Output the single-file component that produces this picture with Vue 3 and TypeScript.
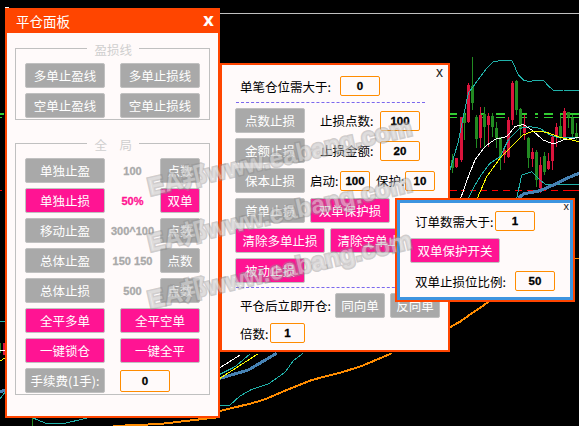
<script setup lang="ts">
type Candle = [number, 0 | 1, number, number, number, number]
const pts = (a: number[][], ox: number, oy: number) =>
  a.map(([x, y]) => `${(x / 3 + ox).toFixed(1)},${(y / 3 + oy).toFixed(1)}`).join(' ')

const candles: Candle[] = [
  [37, 0, 462, 520, 480, 505], [49, 1, 475, 505, 475, 503], [62, 1, 350, 485, 350, 480],
  [73, 0, 335, 420, 345, 370], [85, 1, 250, 370, 255, 365], [97, 0, 170, 330, 258, 310],
  [109, 0, 345, 445, 350, 415], [121, 1, 322, 445, 345, 415], [133, 0, 320, 440, 342, 380],
  [145, 1, 340, 440, 348, 375], [157, 0, 340, 410, 348, 380], [169, 0, 365, 445, 385, 415],
  [181, 0, 410, 510, 412, 475], [193, 1, 440, 490, 450, 465], [205, 1, 350, 475, 360, 470],
  [217, 1, 243, 375, 250, 360], [229, 0, 240, 345, 243, 330], [241, 0, 325, 410, 327, 385],
  [253, 1, 345, 420, 375, 400], [265, 0, 410, 505, 415, 475], [277, 1, 445, 500, 455, 477],
  [289, 0, 450, 560, 457, 540], [301, 1, 470, 580, 495, 565], [313, 0, 455, 525, 468, 515],
  [325, 1, 460, 510, 482, 505], [337, 1, 405, 510, 410, 482], [349, 1, 370, 440, 380, 410],
  [361, 0, 345, 420, 378, 410], [373, 1, 325, 415, 333, 410], [385, 0, 335, 385, 337, 352],
  [397, 0, 345, 410, 353, 400], [409, 0, 368, 420, 400, 415],
]
const candleView = candles.map(([x, up, t, b, bt, bb]) => ({
  x: Math.round(x / 3 + 440), up, t: Math.round(t / 3), b: Math.round(b / 3), bt: Math.round(bt / 3), bh: Math.round((bb - bt) / 3),
}))

const lines = [
  { c: '#20b2aa', w: 1, p: pts([[30, 510], [55, 425], [70, 350], [85, 280], [110, 245], [125, 225], [140, 205], [160, 185], [180, 182], [215, 182], [222, 195], [235, 225], [250, 240], [270, 245], [285, 240], [310, 240], [325, 258], [340, 270], [370, 270], [417, 273]], 440, 0) },
  { c: '#20b2aa', w: 1, p: pts([[85, 595], [100, 565], [120, 530], [150, 490], [180, 470], [205, 420], [240, 385], [270, 380], [300, 385], [330, 405], [350, 412], [417, 412]], 440, 0) },
  { c: '#ffffff', w: 1, p: pts([[62, 595], [85, 530], [105, 480], [135, 440], [165, 418], [200, 410], [225, 380], [250, 373], [275, 390], [310, 420], [340, 432], [370, 420], [417, 412]], 440, 0) },
  { c: '#ffff00', w: 1, p: pts([[112, 595], [140, 530], [180, 475], [220, 435], [250, 405], [280, 393], [320, 397], [360, 412], [417, 425]], 440, 0) },
  { c: '#20b2aa', w: 1, p: pts([[230, 595], [245, 525], [275, 515], [300, 540], [315, 552], [417, 552]], 440, 0) },
  { c: '#4682b4', w: 3, p: pts([[235, 595], [250, 582], [300, 572], [340, 555], [380, 535], [417, 520]], 440, 0) },
  { c: '#ffffff', w: 1, p: pts([[15, 83], [75, 45]], 215, 340) },
  { c: '#20b2aa', w: 1, p: pts([[15, 103], [60, 80], [105, 42]], 215, 340) },
  { c: '#4682b4', w: 3, p: pts([[15, 115], [100, 90], [185, 40]], 215, 340) },
  { c: '#ffff00', w: 1, p: pts([[15, 115], [128, 42]], 215, 340) },
  { c: '#20b2aa', w: 1, p: pts([[15, 197], [45, 195], [75, 168], [110, 148], [160, 132], [210, 97], [235, 62], [265, 40]], 215, 340) },
  { c: '#ff8c00', w: 2, p: pts([[15, 213], [110, 190], [150, 178], [210, 152], [290, 120], [380, 97], [440, 78], [530, 40]], 215, 340) },
  { c: '#ff8c00', w: 2, p: pts([[30, 112], [60, 95], [95, 70], [125, 50], [145, 35]], 440, 290) },
  { c: '#ff8c00', w: 2, p: '113,426 160,424 220,417' },
  { c: '#20b2aa', w: 1, p: '33,418 45,423 62,424 87,418' },
  { c: '#20b2aa', w: 1, p: '0,321 5,321' },
  { c: '#ffffff', w: 1, p: '0,351 5,350' },
  { c: '#ffff00', w: 1, p: '0,361 5,358' },
  { c: '#4682b4', w: 3, p: '0,392 5,390' },
  { c: '#20b2aa', w: 1, p: '0,399 5,392' },
]

const greenDashes = [[450, 457], [463, 466], [480, 484], [496, 505], [520, 527], [535, 538], [544, 553], [560, 579]]
const redDashes = [[450, 457], [461, 465], [470, 476], [481, 487], [492, 498], [503, 510], [515, 522], [527, 534], [539, 546], [551, 558], [563, 579]]

const rows = [
  { btn: '单独止盈', pink: false, val: '100', valPink: false, unit: '点数', unitPink: false },
  { btn: '单独止损', pink: true, val: '50%', valPink: true, unit: '双单', unitPink: true },
  { btn: '移动止盈', pink: false, val: '300^100', valPink: false, unit: '点数', unitPink: false },
  { btn: '总体止盈', pink: false, val: '150 150', valPink: false, unit: '点数', unitPink: false },
  { btn: '总体止损', pink: false, val: '500', valPink: false, unit: '点数', unitPink: false },
]
const watermarks = ['wm1', 'wm2', 'wm3']
</script>

<template>
  <div class="desk">
    <svg class="chart" width="579" height="426" viewBox="0 0 579 426" shape-rendering="crispEdges">
      <path d="M5 10V7H9" fill="none" stroke="#fff" stroke-width="1" />
      <rect x="5" y="13" width="574" height="1" fill="#c0c0c0" />
      <rect x="0" y="113" width="4" height="2" fill="#32cd32" />
      <rect x="0" y="117" width="2" height="1" fill="#32cd32" />
      <rect x="0" y="190" width="2" height="1" fill="#ff0000" />
      <rect x="0" y="343" width="1" height="10" fill="#228b22" />
      <rect x="3" y="343" width="2" height="12" fill="#dc143c" />
      <rect x="32" y="418" width="1" height="8" fill="#228b22" />
      <g v-for="d in greenDashes" :key="'g' + d[0]">
        <rect :x="d[0]" y="113" :width="d[1] - d[0]" height="2" fill="#32cd32" />
        <rect :x="d[0]" y="117" :width="d[1] - d[0]" height="1" fill="#32cd32" />
      </g>
      <rect v-for="d in redDashes" :key="'r' + d[0]" :x="d[0]" y="190" :width="d[1] - d[0]" height="1" fill="#ff0000" />
      <g v-for="k in candleView" :key="k.x">
        <rect :x="k.x" :y="k.t" width="1" :height="k.b - k.t" :fill="k.up ? '#dc143c' : '#228b22'" />
        <rect :x="k.x - 1" :y="k.bt" width="3" :height="k.bh" :fill="k.up ? '#dc143c' : '#228b22'" />
      </g>
      <polyline v-for="l in lines" :key="l.p" :points="l.p" fill="none" :stroke="l.c" :stroke-width="l.w" />
      <rect x="575" y="258" width="4" height="1" fill="#ff8c00" />
    </svg>

    <section class="win left">
      <header class="title">
        <span>平仓面板</span>
        <span class="close-big">x</span>
      </header>
      <fieldset class="group first">
        <legend>盈损线</legend>
        <div class="pair">
          <button class="btn w80">多单止盈线</button>
          <button class="btn w80">多单止损线</button>
        </div>
        <div class="pair">
          <button class="btn w80">空单止盈线</button>
          <button class="btn w80">空单止损线</button>
        </div>
      </fieldset>
      <fieldset class="group second">
        <legend>全　局</legend>
        <div v-for="r in rows" :key="r.btn" class="triple">
          <button class="btn" :class="{ pink: r.pink }">{{ r.btn }}</button>
          <span class="val" :class="{ 'val-pink': r.valPink }">{{ r.val }}</span>
          <button class="btn" :class="{ pink: r.unitPink }">{{ r.unit }}</button>
        </div>
        <div class="pair">
          <button class="btn pink w80">全平多单</button>
          <button class="btn pink w80">全平空单</button>
        </div>
        <div class="pair">
          <button class="btn pink w80">一键锁仓</button>
          <button class="btn pink w80">一键全平</button>
        </div>
        <div class="pair">
          <button class="btn w80">手续费(1手):</button>
          <span class="num fee">0</span>
        </div>
      </fieldset>
    </section>

    <section class="win mid">
      <span class="close-small mid-x">x</span>
      <div class="mid-head">
        <span class="lab head-lab">单笔仓位需大于:</span>
        <span class="num">0</span>
      </div>
      <div class="dash dash-top"></div>
      <div class="stops">
        <div class="line">
          <button class="btn w70">点数止损</button>
          <span class="lab stop-lab">止损点数:</span>
          <span class="num">100</span>
        </div>
        <div class="line">
          <button class="btn w70">金额止损</button>
          <span class="lab stop-lab">止损金额:</span>
          <span class="num">20</span>
        </div>
        <div class="line">
          <button class="btn w70">保本止损</button>
          <span class="lab start-lab">启动:</span>
          <span class="num w30">100</span>
          <span class="lab guard-lab">保护:</span>
          <span class="num w30">10</span>
        </div>
        <div class="line gap5">
          <button class="btn w70">首单止损</button>
          <button class="btn pink w80">双单保护损</button>
        </div>
        <div class="line gap5">
          <button class="btn pink w90">清除多单止损</button>
          <button class="btn pink w90">清除空单止损</button>
        </div>
        <div class="line">
          <button class="btn pink w70">被动止损</button>
        </div>
      </div>
      <div class="dash dash-bottom"></div>
      <div class="reopen">
        <span class="lab reopen-lab">平仓后立即开仓:</span>
        <button class="btn w50">同向单</button>
        <button class="btn w50">反向单</button>
      </div>
      <div class="times">
        <span class="lab times-lab">倍数:</span>
        <span class="num w35">1</span>
      </div>
    </section>

    <section class="win third">
      <div class="third-inner">
        <span class="close-small third-x">x</span>
        <div class="t-row t-one">
          <span class="lab t-lab1">订单数需大于:</span>
          <span class="num">1</span>
        </div>
        <button class="btn pink w90 t-btn">双单保护开关</button>
        <div class="t-row t-three">
          <span class="lab t-lab2">双单止损位比例:</span>
          <span class="num">50</span>
        </div>
      </div>
    </section>

    <div v-for="w in watermarks" :key="w" class="wm" :class="w">EA邦www.eabang.com</div>
  </div>
</template>

<style>
html, body { margin: 0; background: #000; }
</style>

<style scoped>
.desk {
  position: relative;
  width: 579px;
  height: 426px;
  overflow: hidden;
  background: #000;
  font-family: "Noto Sans CJK SC", "Liberation Sans", sans-serif;
  font-size: 12.5px;
}
.chart { position: absolute; left: 0; top: 0; }
.win {
  position: absolute;
  box-sizing: border-box;
  background: #fffafa;
  border: 2px solid #ff4500;
}
.left { left: 5px; top: 8px; width: 215px; height: 410px; }
.mid { left: 220px; top: 63px; width: 230px; height: 289px; }
.third { left: 395px; top: 198px; width: 180px; height: 104px; }
.title {
  display: flex;
  justify-content: space-between;
  align-items: center;
  height: 25px;
  padding: 0 4px 0 9px;
  background: #ff4500;
  color: #fff;
  font-size: 13.5px;
  margin-top: -2px;
}
.close-big {
  font-family: "DejaVu Sans", sans-serif;
  font-weight: 700;
  font-size: 17px;
  line-height: 20px;
  margin-top: -2px;
}
.group {
  box-sizing: border-box;
  width: 195px;
  margin: 0 0 0 8px;
  padding: 0 9px;
  border: 1px solid #c0c0c0;
  min-width: 0;
}
.group legend {
  margin: 0 auto;
  padding: 0 8px;
  color: #cfcfcf;
  font-size: 12.5px;
  line-height: 20px;
  height: 16px;
  text-align: center;
  width: 36px;
  box-sizing: content-box;
  white-space: nowrap;
}
.first { height: 80px; margin-top: 7px; }
.second { height: 260px; margin-top: 15px; }
.first > .pair:first-of-type { margin-top: 7px; }
.second > .triple:first-of-type { margin-top: 7px; }
.pair { display: flex; gap: 15px; margin-bottom: 5px; align-items: center; }
.triple {
  display: grid;
  grid-template-columns: 80px 55px 40px;
  margin-bottom: 5px;
  align-items: center;
}
.btn {
  box-sizing: border-box;
  height: 25px;
  padding: 0;
  border: 1px solid #c0c0c0;
  border-radius: 2px;
  background: #a9a9a9;
  color: #fff;
  font-family: inherit;
  font-size: 12.5px;
  line-height: 21px;
  white-space: nowrap;
  overflow: hidden;
}
.pink { background: #ff1493; }
.w50 { width: 50px; }
.w70 { width: 70px; }
.w80 { width: 80px; }
.w90 { width: 90px; }
.val {
  font-family: "Liberation Sans", sans-serif;
  font-weight: 700;
  font-size: 11px;
  -webkit-text-stroke: 0.3px currentColor;
  color: #a9a9a9;
  text-align: center;
  white-space: nowrap;
}
.val-pink { color: #ff1493; }
.num {
  box-sizing: border-box;
  display: inline-block;
  flex: none;
  width: 40px;
  height: 20px;
  border: 1px solid #ff8c00;
  border-radius: 2px;
  background: #fffafa;
  color: #000;
  font-family: "Liberation Sans", sans-serif;
  font-weight: 700;
  font-size: 11.5px;
  -webkit-text-stroke: 0.3px #000;
  line-height: 18px;
  text-align: center;
}
.w30 { width: 30px; }
.w35 { width: 35px; }
.fee { width: 50px; height: 22px; line-height: 20px; }
.lab { color: #000; font-size: 12.5px; white-space: nowrap; flex: none; }
.close-small {
  position: absolute;
  color: #222;
  font-family: "Liberation Sans", sans-serif;
  line-height: 1;
}
.mid-x { right: 5px; top: 0; font-size: 14px; }
.third-x { right: 1px; top: -2px; font-size: 11px; }
.mid-head { display: flex; margin-top: 11px; padding-left: 18px; align-items: center; }
.head-lab { width: 100px; }
.dash { width: 189px; margin-left: 14px; border-top: 1px dashed #7b68ee; }
.dash-top { margin-top: 6px; }
.dash-bottom { margin-top: 4px; }
.stops { display: flex; flex-direction: column; gap: 5px; margin-top: 5px; padding-left: 13px; }
.line { display: flex; align-items: center; height: 25px; }
.gap5 { gap: 5px; }
.stop-lab { margin-left: 15px; width: 60px; }
.start-lab { margin-left: 5px; width: 30px; }
.guard-lab { margin-left: 6px; width: 29px; }
.reopen { display: flex; align-items: center; gap: 5px; margin-top: 5px; padding-left: 18px; }
.reopen-lab { width: 90px; }
.times { display: flex; align-items: center; margin-top: 5px; padding-left: 18px; }
.times-lab { width: 30px; }
.third-inner {
  position: relative;
  box-sizing: border-box;
  height: 100%;
  border: 3px solid #3d94e0;
  overflow: hidden;
}
.t-row { display: flex; align-items: center; padding-left: 15px; }
.t-one { margin-top: 8px; }
.t-lab1 { width: 80px; }
.t-btn { display: block; margin: 7px 0 0 10px; }
.t-three { margin-top: 8px; }
.t-lab2 { width: 100px; }
.wm {
  position: absolute;
  left: 148px;
  width: 285px;
  height: 30px;
  font-family: "Liberation Sans", "Noto Sans CJK SC", sans-serif;
  font-weight: 700;
  font-size: 25px;
  line-height: 30px;
  white-space: nowrap;
  color: rgba(240, 240, 240, 0.45);
  -webkit-text-stroke: 3px rgba(140, 140, 140, 0.42);
  paint-order: stroke fill;
  transform: rotate(-13deg);
  transform-origin: 0 50%;
  pointer-events: none;
}
.wm1 { top: 172px; }
.wm2 { top: 228px; }
.wm3 { top: 285px; }
</style>
